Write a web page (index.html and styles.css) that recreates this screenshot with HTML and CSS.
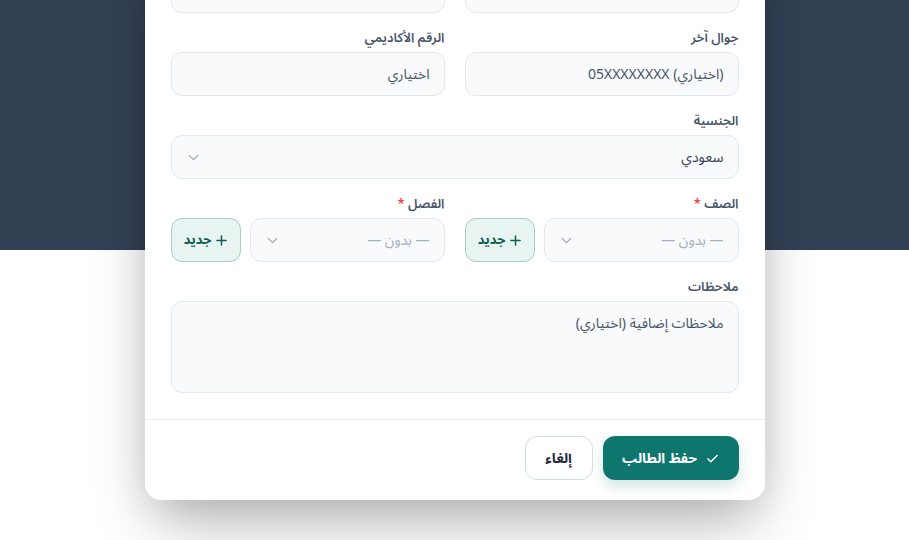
FILE: index.html
```html
<!DOCTYPE html>
<html lang="ar" dir="rtl">
<head>
<meta charset="utf-8">
<title>إضافة طالب</title>
<link rel="stylesheet" href="styles.css">
</head>
<body>
<div class="page">
  <section class="card">
    <div class="card-body">
      <div class="field">
        <span class="label">&nbsp;</span>
        <input class="control" aria-label="رقم الجوال">
      </div>
      <div class="field">
        <span class="label">&nbsp;</span>
        <input class="control" aria-label="البريد الإلكتروني">
      </div>

      <div class="field">
        <label class="label">جوال آخر</label>
        <input class="control" placeholder="(اختياري) 05XXXXXXXX">
      </div>
      <div class="field">
        <label class="label">الرقم الأكاديمي</label>
        <input class="control" placeholder="اختياري">
      </div>

      <div class="field span-2">
        <label class="label">الجنسية</label>
        <div class="control select">
          <span class="value">سعودي</span>
          <svg class="chev" viewBox="0 0 12 8" width="11" height="7"><path d="M1 1.5l5 5 5-5" fill="none" stroke="#94a3b8" stroke-width="1.3" stroke-linecap="round" stroke-linejoin="round"/></svg>
        </div>
      </div>

      <div class="field">
        <label class="label">الصف <span class="req">*</span></label>
        <div class="combo">
          <div class="control select">
            <span class="value muted">— بدون —</span>
            <svg class="chev" viewBox="0 0 12 8" width="11" height="7"><path d="M1 1.5l5 5 5-5" fill="none" stroke="#94a3b8" stroke-width="1.3" stroke-linecap="round" stroke-linejoin="round"/></svg>
          </div>
          <button class="btn-new" type="button">
            <svg viewBox="0 0 12 12" width="11" height="11"><path d="M6 1v10M1 6h10" stroke="#0f5c52" stroke-width="1.6" stroke-linecap="round"/></svg>
            <span>جديد</span>
          </button>
        </div>
      </div>
      <div class="field">
        <label class="label">الفصل <span class="req">*</span></label>
        <div class="combo">
          <div class="control select">
            <span class="value muted">— بدون —</span>
            <svg class="chev" viewBox="0 0 12 8" width="11" height="7"><path d="M1 1.5l5 5 5-5" fill="none" stroke="#94a3b8" stroke-width="1.3" stroke-linecap="round" stroke-linejoin="round"/></svg>
          </div>
          <button class="btn-new" type="button">
            <svg viewBox="0 0 12 12" width="11" height="11"><path d="M6 1v10M1 6h10" stroke="#0f5c52" stroke-width="1.6" stroke-linecap="round"/></svg>
            <span>جديد</span>
          </button>
        </div>
      </div>

      <div class="field span-2">
        <label class="label">ملاحظات</label>
        <textarea class="control area" placeholder="ملاحظات إضافية (اختياري)"></textarea>
      </div>
    </div>

    <footer class="card-foot">
      <button class="btn-save" type="button">
        <svg viewBox="0 0 14 14" width="13" height="13"><path d="M2 7.3l3.2 3.2L12 3.7" fill="none" stroke="#fff" stroke-width="1.5" stroke-linecap="round" stroke-linejoin="round"/></svg>
        <span>حفظ الطالب</span>
      </button>
      <button class="btn-cancel" type="button">إلغاء</button>
    </footer>
  </section>
</div>
</body>
</html>
```

FILE: styles.css
```css
* { box-sizing: border-box; }

html, body {
  margin: 0;
  height: 100%;
  overflow: hidden;
}

body {
  font-family: "Noto Sans Arabic", "Noto Sans", "DejaVu Sans", sans-serif;
  color: #334155;
  background: linear-gradient(#334155 0, #334155 250px, #ffffff 250px);
}

.page {
  display: flex;
  justify-content: center;
}

.card {
  width: 620px;
  margin-top: -75px;
  background: #ffffff;
  border-radius: 16px;
  box-shadow: 0 30px 60px -10px rgba(0, 0, 0, 0.3), 0 0 40px rgba(0, 0, 0, 0.08);
}

.card-body {
  display: grid;
  grid-template-columns: 1fr 1fr;
  column-gap: 20px;
  row-gap: 15px;
  padding: 20px 26px 26px;
}

.span-2 { grid-column: span 2; }

.field {
  display: flex;
  flex-direction: column;
}

.label {
  font-size: 13px;
  line-height: 20px;
  font-weight: 600;
  color: #475569;
  margin-bottom: 4px;
}

.req { color: #ef4444; }

.control {
  height: 44px;
  width: 100%;
  border: 1px solid #e2e8f0;
  background: #f8fafc;
  border-radius: 11px;
  padding: 0 14px;
  font-family: inherit;
  font-size: 14px;
  color: #334155;
  outline: none;
}

.control::placeholder {
  color: #475569;
  opacity: 1;
}

.select {
  display: flex;
  align-items: center;
  justify-content: space-between;
  padding: 0 14px 0 16px;
}

.value { font-size: 14px; color: #334155; }
.value.muted { color: #a3afbf; }

.chev { display: block; }

.combo {
  display: flex;
  gap: 9px;
}

.combo .select { flex: 1; }

.btn-new {
  flex: 0 0 70px;
  height: 44px;
  border: 1px solid #a9cdc6;
  background: #e7f4f1;
  border-radius: 11px;
  display: flex;
  align-items: center;
  justify-content: center;
  gap: 5px;
  font-family: inherit;
  font-size: 13px;
  font-weight: 700;
  color: #0f5c52;
  padding: 0;
}

.btn-new svg { display: block; }

.area {
  height: 92px;
  padding: 12px 14px;
  resize: none;
  line-height: 20px;
}

.card-foot {
  border-top: 1px solid #e6eef0;
  padding: 16px 26px 20px;
  display: flex;
  gap: 10px;
}

.btn-save {
  height: 44px;
  width: 136px;
  border: none;
  border-radius: 12px;
  background: #0f766e;
  color: #ffffff;
  font-family: inherit;
  font-size: 14px;
  font-weight: 700;
  display: flex;
  align-items: center;
  justify-content: center;
  gap: 9px;
  box-shadow: 0 6px 14px rgba(15, 118, 110, 0.2);
}

.btn-save svg { display: block; }

.btn-cancel {
  height: 44px;
  width: 68px;
  border: 1px solid #cfdfe0;
  border-radius: 12px;
  background: #ffffff;
  color: #1e293b;
  font-family: inherit;
  font-size: 14px;
  font-weight: 700;
}
```
